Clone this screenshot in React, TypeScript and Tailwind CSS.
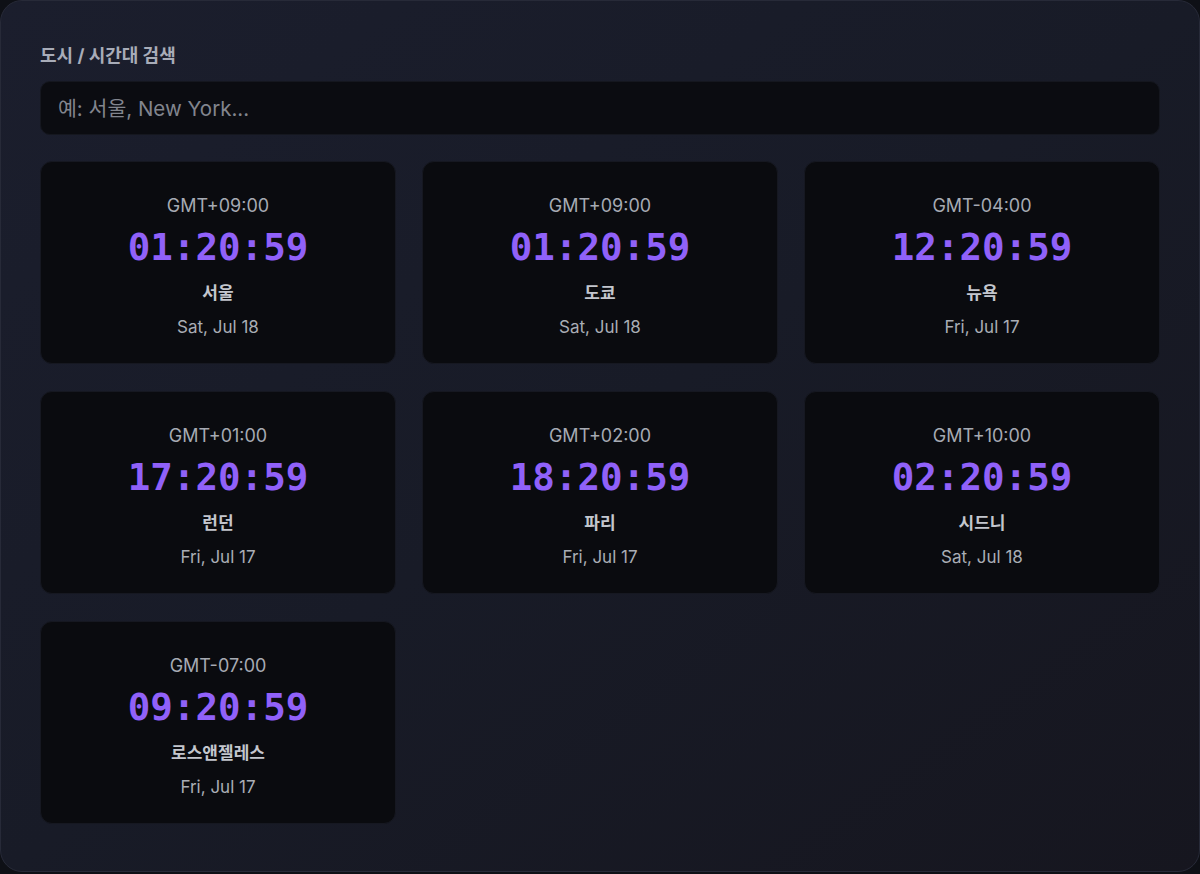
import React from 'react'

const cities = [
  { tz: 'GMT+09:00', time: '01:20:59', name: '서울', date: 'Sat, Jul 18' },
  { tz: 'GMT+09:00', time: '01:20:59', name: '도쿄', date: 'Sat, Jul 18' },
  { tz: 'GMT-04:00', time: '12:20:59', name: '뉴욕', date: 'Fri, Jul 17' },
  { tz: 'GMT+01:00', time: '17:20:59', name: '런던', date: 'Fri, Jul 17' },
  { tz: 'GMT+02:00', time: '18:20:59', name: '파리', date: 'Fri, Jul 17' },
  { tz: 'GMT+10:00', time: '02:20:59', name: '시드니', date: 'Sat, Jul 18' },
  { tz: 'GMT-07:00', time: '09:20:59', name: '로스앤젤레스', date: 'Fri, Jul 17' },
]

const sans = "font-['Inter','Noto_Sans_CJK_KR',sans-serif]"

const App = () => {
  return (
    <div className={`h-[874px] w-[1200px] bg-[#0e1016] ${sans}`}>
      <div className="h-[872px] rounded-[22px] border border-[#272a38] bg-gradient-to-br from-[#1b1e2d] via-[#181b27] to-[#16161f] px-[39px] pt-[43px]">
        <label className="block text-[18px] font-bold leading-6 text-[#a8acb8]">
          도시 / 시간대 검색
        </label>
        <input
          type="text"
          placeholder="예: 서울, New York..."
          className="mt-[13px] block h-[54px] w-full rounded-[10px] border border-[#15171f] bg-[#0b0c11] px-[17px] text-[20.5px] text-[#d0d3da] outline-none placeholder:text-[#82858e]"
        />
        <div className="mt-[26px] grid grid-cols-3 gap-x-[26px] gap-y-[27px]">
          {cities.map((c, i) => (
            <div
              key={i}
              className="flex h-[203px] flex-col items-center rounded-[12px] border border-[#161821] bg-[#0a0b0f] pt-[32px]"
            >
              <div className="text-[18px] leading-6 text-[#a6aab3]">{c.tz}</div>
              <div className="mt-[6px] font-['DejaVu_Sans_Mono',monospace] text-[37.5px] font-bold leading-[46px] text-[#9061f9]">
                {c.time}
              </div>
              <div className="mt-[12px] text-[17px] font-bold leading-[22px] text-[#c3c6cd]">{c.name}</div>
              <div className="mt-[12px] text-[17px] leading-[22px] text-[#a9adb5]">{c.date}</div>
            </div>
          ))}
        </div>
      </div>
    </div>
  )
}

export default App
